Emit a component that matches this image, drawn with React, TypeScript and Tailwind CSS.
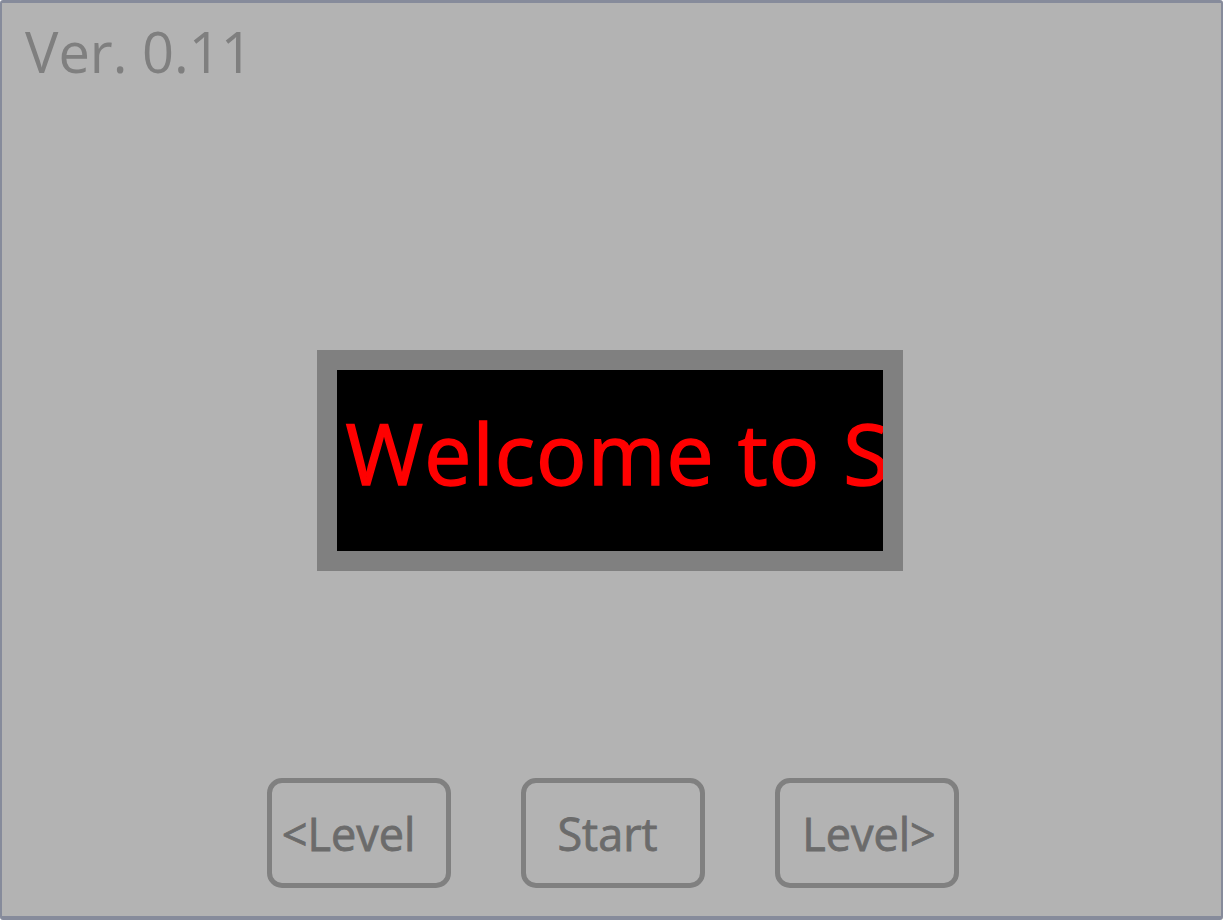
import React from "react";

const font = { fontFamily: '"Open Sans", "Noto Sans", sans-serif' };

export default function App() {
  return (
    <div
      className="w-[1223px] h-[920px] box-border bg-[#b3b3b3] border-x-2 border-t-[3px] border-b-[4px] border-[#868b9b] rounded-[3px] flex flex-col overflow-hidden"
      style={font}
    >
      <div className="pl-[23px] pt-[20px] text-[56px] leading-none text-[#7f7f7f] h-[76px]">
        Ver. 0.11
      </div>
      <div className="mt-[271px] flex justify-center">
        <div className="ml-[-4px] w-[586px] h-[221px] bg-[#808080] p-[20px] box-border">
          <div className="w-full h-full bg-black overflow-hidden whitespace-nowrap pt-[41px] pl-[9px]">
            <span className="text-[84px] leading-none tracking-[1.1px] [-webkit-text-stroke:1.5px_#ff0000] text-[#ff0000]">Welcome to Simon</span>
          </div>
        </div>
      </div>
      <div className="mt-[207px] flex justify-center gap-[70px] ml-[2px]">
        <button className="w-[184px] h-[110px] box-border border-[5px] border-[#808080] rounded-[15px] text-[45px] leading-none [-webkit-text-stroke:0.8px_#6b6b6b] text-[#6b6b6b] flex items-center justify-center pr-[20px]">
          &lt;Level
        </button>
        <button className="w-[184px] h-[110px] box-border border-[5px] border-[#808080] rounded-[15px] text-[45px] leading-none [-webkit-text-stroke:0.8px_#6b6b6b] text-[#6b6b6b] flex items-center justify-center pr-[10px]">
          Start
        </button>
        <button className="w-[184px] h-[110px] box-border border-[5px] border-[#808080] rounded-[15px] text-[45px] leading-none [-webkit-text-stroke:0.8px_#6b6b6b] text-[#6b6b6b] flex items-center justify-center pl-[5px]">
          Level&gt;
        </button>
      </div>
    </div>
  );
}
